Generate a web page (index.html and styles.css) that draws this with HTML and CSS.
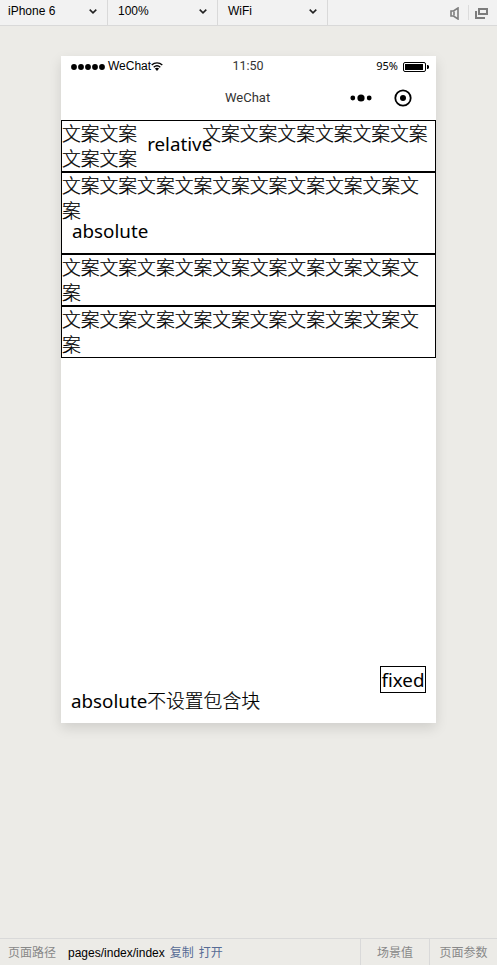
FILE: index.html
```html
<!DOCTYPE html>
<html lang="zh-CN">
<head>
<meta charset="utf-8">
<title>Simulator</title>
<link rel="stylesheet" href="styles.css">
</head>
<body>
<header class="toolbar">
  <div class="select device"><span>iPhone 6</span><svg class="chevron" viewBox="0 0 8 5"><path d="M.7.7 4 3.8 7.3.7"/></svg></div>
  <div class="select"><span>100%</span><svg class="chevron" viewBox="0 0 8 5"><path d="M.7.7 4 3.8 7.3.7"/></svg></div>
  <div class="select"><span>WiFi</span><svg class="chevron" viewBox="0 0 8 5"><path d="M.7.7 4 3.8 7.3.7"/></svg></div>
  <div class="tools">
    <svg class="sound" width="10" height="13" viewBox="0 0 10 13"><path d="M1 4h2.5L8 1v11L3.5 9H1z"/><path d="M4 4.5v4"/></svg>
    <i class="tool-line"></i>
    <svg class="windows" width="13" height="11" viewBox="0 0 13 11"><path d="M4 1h8v5H4zM1 3v7h9"/></svg>
  </div>
</header>
<main class="stage">
  <section class="phone">
    <div class="status">
      <div class="carrier">
        <svg width="35" height="6" viewBox="0 0 35 6"><circle cx="3" cy="3" r="2.9"/><circle cx="10" cy="3" r="2.9"/><circle cx="17" cy="3" r="2.9"/><circle cx="24" cy="3" r="2.9"/><circle cx="31" cy="3" r="2.9"/></svg>
        <span>WeChat</span>
        <svg class="wifi" width="12" height="9" viewBox="0 0 12 9"><path d="M.7 3C3.8.1 8.2.1 11.3 3M2.7 5.2c2-1.8 4.6-1.8 6.6 0"/><path class="solid" d="M3.9 6.5Q6 5.2 8.1 6.5L6 8.9z"/></svg>
      </div>
      <time>11:50</time>
      <div class="power"><span>95%</span><svg width="26" height="10" viewBox="0 0 26 10"><rect x=".5" y=".5" width="22" height="9" rx="1.5" fill="none" stroke="#000"/><rect x="2" y="2" width="18" height="6"/><path d="M24 3h1l1 1v2l-1 1h-1z"/></svg></div>
    </div>
    <div class="navbar">
      <span class="title">WeChat</span>
      <svg class="more" width="22" height="8" viewBox="0 0 22 8"><circle cx="2.8" cy="4" r="2.4"/><circle cx="11" cy="4" r="3.6"/><circle cx="19.2" cy="4" r="2.4"/></svg>
      <svg class="close" width="18" height="18" viewBox="0 0 18 18"><circle cx="9" cy="9" r="7.7" fill="none" stroke="#000" stroke-width="1.8"/><circle cx="9" cy="9" r="3"/></svg>
    </div>
    <div class="page">
      <div class="box">文案文案<span class="relative">relative</span>文案文案文案文案文案文案文案文案</div>
      <div class="box tall">文案文案文案文案文案文案文案文案文案文案<span class="absolute">absolute</span></div>
      <div class="box">文案文案文案文案文案文案文案文案文案文案</div>
      <div class="box">文案文案文案文案文案文案文案文案文案文案</div>
    </div>
    <div class="fixed">fixed</div>
    <div class="loose"><span class="latin">absolute</span>不设置包含块</div>
  </section>
</main>
<footer class="footer">
  <span class="label">页面路径</span>
  <span class="path">pages/index/index</span>
  <a>复制</a><a>打开</a>
  <span class="cell scene">场景值</span>
  <span class="cell params">页面参数</span>
</footer>
</body>
</html>
```

FILE: styles.css
```css
* { box-sizing: border-box; }
body {
  margin: 0;
  height: 965px;
  display: flex;
  flex-direction: column;
  overflow: hidden;
  background: #ecebe7;
  color: #000;
  font: 12px/16px "Liberation Sans", "Noto Sans CJK SC", sans-serif;
}
svg { display: block; flex: none; }
.toolbar {
  display: flex;
  height: 26px;
  flex: none;
  background: #f2f2f2;
  border-bottom: 1px solid #d9d9d9;
}
.select {
  display: flex;
  justify-content: space-between;
  width: 110px;
  padding: 3px 10px 0;
  border-right: 1px solid #d9d9d9;
}
.device { width: 108px; padding-left: 8px; }
.chevron {
  width: 8px;
  height: 5px;
  margin-top: 6px;
  fill: none;
  stroke: #222;
  stroke-width: 1.6;
}
.tools { display: flex; margin-left: auto; padding-right: 9px; }
.sound { margin: 7px 8px 0 0; fill: none; stroke: #7d7d7d; stroke-width: 1.6; }
.tool-line { width: 1px; height: 15px; margin: 5px 6px 0 0; background: #dcdcdc; }
.windows { margin-top: 8px; fill: none; stroke: #7d7d7d; stroke-width: 2; }
.stage { flex: 1; padding: 30px 61px; }
.phone {
  position: relative;
  width: 375px;
  height: 667px;
  background: #fff;
  box-shadow: 0 5px 12px rgba(0, 0, 0, .12);
}
.status {
  display: grid;
  grid-template-columns: 1fr auto 1fr;
  height: 20px;
  padding: 2px 7px 0 10px;
}
.status time { margin-right: 4px; color: #333; font: 12.5px/16px Roboto, sans-serif; }
.carrier { display: flex; }
.carrier svg { margin-top: 6px; }
.carrier span { margin-left: 2px; }
.carrier .wifi { margin-top: 4px; fill: none; stroke: #000; stroke-width: 1.4; }
.carrier .wifi .solid { fill: #000; stroke: none; }
.power {
  display: flex;
  justify-content: flex-end;
  font: 11px/16px "Noto Sans", sans-serif;
}
.power svg { margin: 4px 0 0 5px; }
.navbar { display: flex; align-items: center; height: 44px; padding-right: 24px; }
.title { width: 211px; padding-left: 164px; color: #333; font: 13px/16px Roboto, sans-serif; flex: none; }
.more { margin-left: 78px; }
.close { margin-left: auto; }
.page, .fixed, .loose {
  font: 18.8px/25px "Noto Sans", "Noto Sans CJK SC", sans-serif;
}
.box {
  position: relative;
  height: 52px;
  padding-top: 1px;
  border: 1px solid #000;
  font-weight: 300;
  -webkit-text-stroke: .2px #000;
}
.tall { height: 82px; }
.relative, .absolute { font-weight: 400; -webkit-text-stroke: 0; }
.relative { position: relative; top: 10px; left: 10px; }
.absolute { position: absolute; left: 10px; bottom: 9px; }
.fixed {
  position: absolute;
  right: 10px;
  bottom: 30px;
  width: 46px;
  height: 27px;
  padding-top: 1px;
  border: 1px solid #000;
  text-align: center;
}
.loose {
  position: absolute;
  left: 10px;
  bottom: 9px;
  font-weight: 300;
  -webkit-text-stroke: .2px #000;
}
.latin { font-weight: 400; -webkit-text-stroke: 0; }
.footer {
  display: flex;
  height: 27px;
  flex: none;
  border-top: 1px solid #d9d9d9;
  line-height: 28px;
  color: #888;
  padding-left: 8px;
}
.path { margin: 0 5px 0 12px; color: #000; }
.footer a { margin-right: 5px; color: #576b95; }
.cell { border-left: 1px solid #d9d9d9; text-align: center; }
.scene { width: 69px; margin-left: auto; }
.params { width: 68px; }
```
